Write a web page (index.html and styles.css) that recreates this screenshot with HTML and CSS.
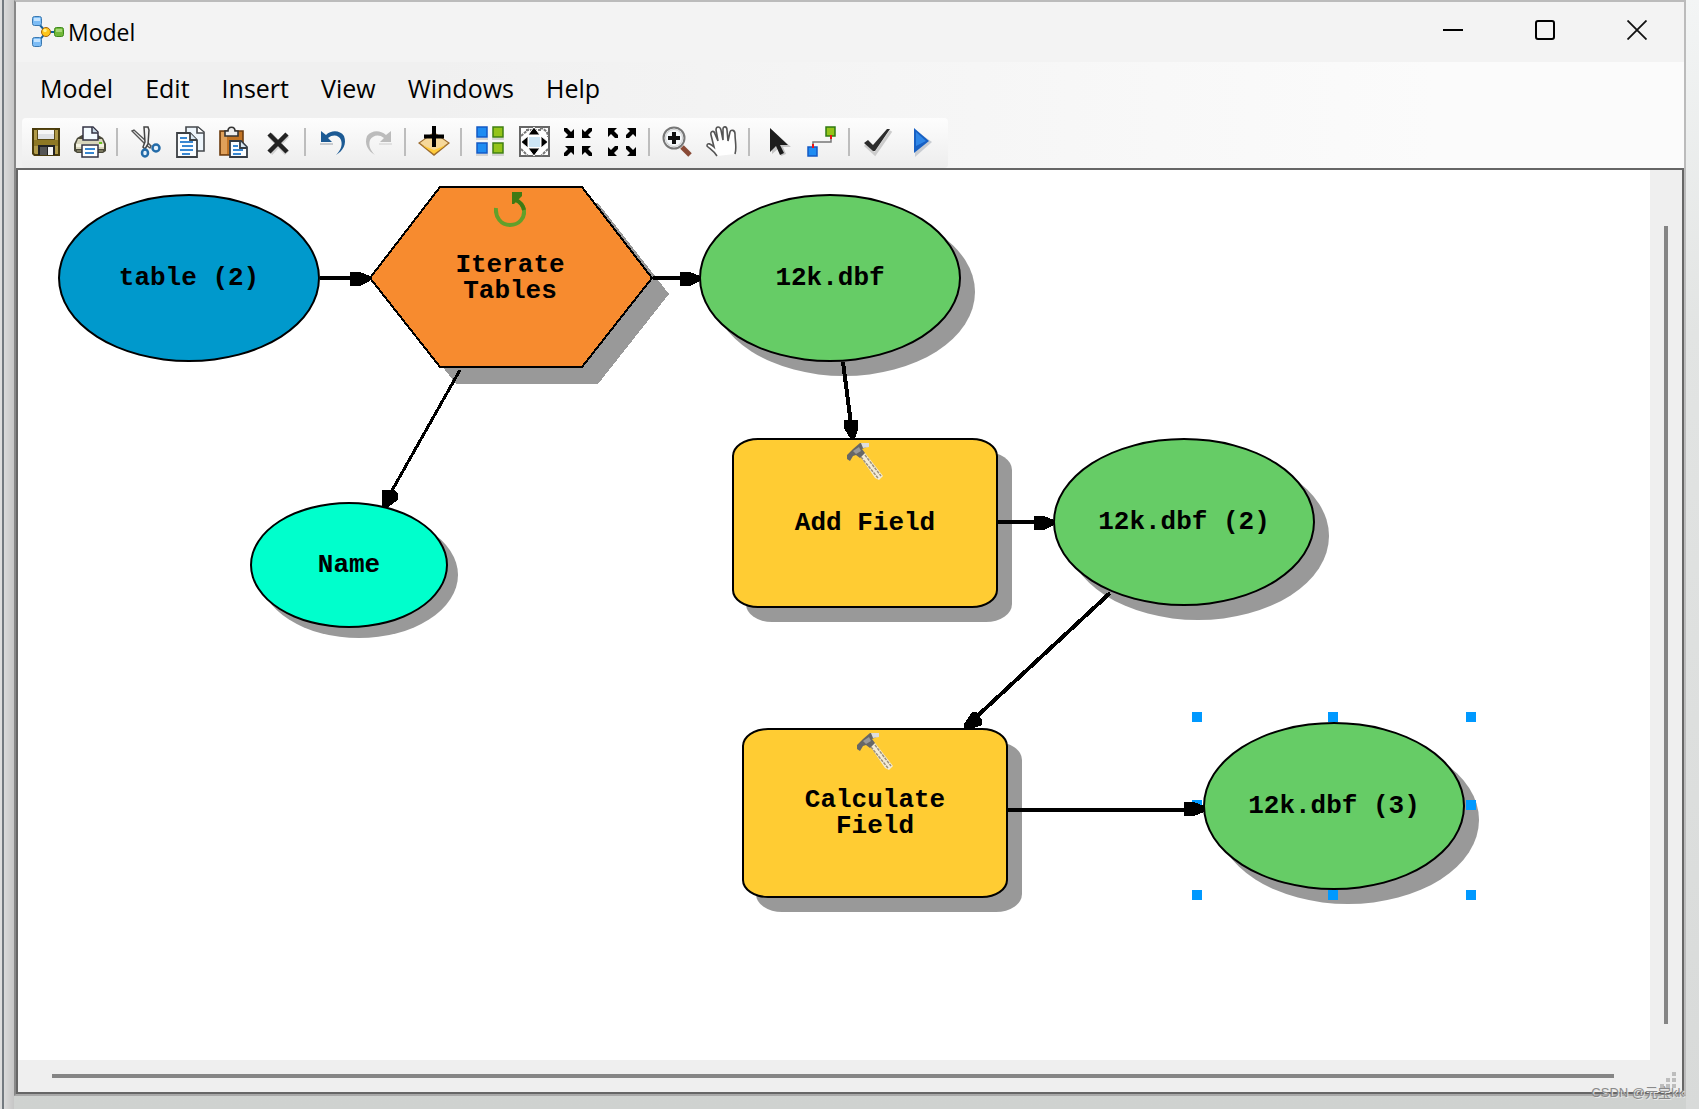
FILE: index.html
```html
<!DOCTYPE html>
<html lang="en">
<head>
<meta charset="utf-8">
<title>Model</title>
<link rel="stylesheet" href="styles.css">
</head>
<body>
<div class="rail"></div>
<main class="window">
  <header class="titlebar">
    <svg class="app-icon" width="32" height="32" viewBox="0 0 32 32" aria-hidden="true">
      <path d="M7 8 14 16 7 25M16 16H24" fill="none" stroke="#12609c" stroke-width="2"/>
      <rect x="0.5" y="0.5" width="9" height="9" rx="2" fill="#7cbcf5" stroke="#3a78b0"/>
      <rect x="2" y="2" width="6" height="3" fill="#c4e4ff"/>
      <rect x="0.5" y="21.500" width="9" height="9" rx="2" fill="#7cbcf5" stroke="#3a78b0"/>
      <rect x="2" y="23" width="6" height="3" fill="#c4e4ff"/>
      <circle cx="14" cy="16" r="4.500" fill="#ffc61a" stroke="#a8640c"/>
      <circle cx="13" cy="14.500" r="1.800" fill="#fff08a"/>
      <rect x="22.500" y="11.500" width="9" height="9" rx="2" fill="#72b83a" stroke="#3d8a1c"/>
      <rect x="24" y="13" width="6" height="3" fill="#a6d878"/>
    </svg>
    <h1 class="title">Model</h1>
    <div class="controls">
      <button class="control" aria-label="Minimize"><svg width="20" height="20" viewBox="0 0 20 20"><path d="M0 10H20" stroke="#000" stroke-width="2"/></svg></button>
      <button class="control" aria-label="Maximize"><svg width="20" height="20" viewBox="0 0 20 20"><rect x="1" y="1" width="18" height="18" rx="2" fill="none" stroke="#000" stroke-width="2"/></svg></button>
      <button class="control" aria-label="Close"><svg width="20" height="20" viewBox="0 0 20 20"><path d="M0.500 0.500 19.500 19.500M19.500 0.500 0.500 19.500" stroke="#111" stroke-width="1.800"/></svg></button>
    </div>
  </header>

  <div class="bars">
    <nav class="menu" aria-label="Menu bar">
      <button class="menu-item">Model</button>
      <button class="menu-item">Edit</button>
      <button class="menu-item">Insert</button>
      <button class="menu-item">View</button>
      <button class="menu-item">Windows</button>
      <button class="menu-item">Help</button>
    </nav>
    <div class="toolbar" role="toolbar" aria-label="Tools">
      <button class="tool" aria-label="Save"><svg viewBox="0 0 32 32"><path d="M2 2H30V30H4L2 28Z" fill="#4a3c0c"/><path d="M4 4H28V28H5L4 27Z" fill="#b09a48"/><path d="M4 14H28V20H4Z" fill="#8e7824"/><rect x="7" y="3" width="18" height="11" fill="#5a4a14"/><rect x="8" y="4" width="16" height="9" fill="#dfe1e4"/><rect x="8" y="4" width="16" height="4" fill="#f6f6f6"/><rect x="8" y="19" width="17" height="10" fill="#222"/><rect x="10" y="21" width="7" height="8" fill="#555"/><rect x="18" y="21" width="5" height="8" fill="#f4f4f4"/></svg></button>
      <button class="tool" aria-label="Print"><svg viewBox="0 0 32 32"><path d="M3 12 8 9H24L29 12 32 18V25L29 27H3L0 25V18Z" fill="#4b4a3a"/><path d="M4 13H28L30 18V23H2V18Z" fill="#d8d5bb"/><path d="M2 18H30V21H2Z" fill="#f3f2e0"/><path d="M3 24H29V26H3Z" fill="#7a785f"/><path d="M9 14V1H19L24 6V14Z" fill="#f4fbff" stroke="#334" stroke-width="1.500"/><path d="M18 1V7H24" fill="#c5d8e6" stroke="#334" stroke-width="1.500"/><rect x="8" y="19" width="16" height="12" fill="#fff" stroke="#334" stroke-width="1.500"/><path d="M11 23H21M11 27H20" stroke="#3887d2" stroke-width="2"/><rect x="25" y="16" width="3" height="2" fill="#6cc322"/></svg></button>
      <span class="sep"></span>
      <button class="tool" aria-label="Cut"><svg viewBox="0 0 32 32"><path d="M2 5 16 19 20 22 21 20 16 15 4 4Z" fill="#f4f4f4" stroke="#555" stroke-width="1.400"/><path d="M14 1H18L19 4 18 18 15 23 13 21 15 16Z" fill="#f4f4f4" stroke="#444" stroke-width="1.500"/><circle cx="26" cy="22" r="3.500" fill="#e5f1fb" stroke="#236ba8" stroke-width="2.500"/><ellipse cx="15" cy="27" rx="3" ry="3.500" fill="#e5f1fb" stroke="#236ba8" stroke-width="2.500"/></svg></button>
      <button class="tool" aria-label="Copy"><svg viewBox="0 0 32 32"><path d="M12 1H24L30 6V25H12Z" fill="#eef6fc" stroke="#44484c" stroke-width="1.600"/><path d="M23 1V7H30" fill="#fff" stroke="#44484c" stroke-width="1.600"/><path d="M3 7H16L23 14V31H3Z" fill="#fafdff" stroke="#3c4044" stroke-width="1.800"/><path d="M16 7V14H23" fill="#d7e7f3" stroke="#3c4044" stroke-width="1.800"/><path d="M6 12H13M6 16H19M8 20H19M6 24H19M8 28H16" stroke="#3887d2" stroke-width="2"/></svg></button>
      <button class="tool" aria-label="Paste"><svg viewBox="0 0 32 32"><path d="M2 5H25V29H2Z" fill="#c27424" stroke="#6c3c10" stroke-width="1.600"/><path d="M3 6H9V28H3Z" fill="#dfa05a"/><path d="M7 10V5H10C10 0 17 0 17 5H20V10Z" fill="#ededed" stroke="#333" stroke-width="1.600"/><path d="M12 15H23L29 21V31H12Z" fill="#fafdff" stroke="#333b44" stroke-width="1.800"/><path d="M22 15V22H29" fill="#d7e7f3" stroke="#333b44" stroke-width="1.800"/><path d="M15 20H20M15 24H25M15 28H23" stroke="#3887d2" stroke-width="2"/></svg></button>
      <button class="tool" aria-label="Delete"><svg viewBox="0 0 32 32"><path d="M8 9 25 27M25 9 8 27" stroke="#d0d0d0" stroke-width="6"/><path d="M7 8 25 26M25 8 7 26" stroke="#222" stroke-width="4.500"/></svg></button>
      <span class="sep"></span>
      <button class="tool" aria-label="Undo"><svg viewBox="0 0 32 32"><path d="M3 5V16H14L10 12C15 8 21 9 23 14 25 20 22 25 18 29 25 25 29 18 26 10 22 4 13 4 8 9Z" fill="#1c5a94"/><path d="M2 18H15" stroke="#b8bcc2" stroke-width="1.500"/></svg></button>
      <button class="tool" aria-label="Redo" disabled><svg viewBox="0 0 32 32"><path d="M29 5V16H18L22 12C17 8 11 9 8 14 6 20 9 25 13 29 6 25 2 18 5 10 10 4 18 4 24 9Z" fill="#bcbcbc"/><path d="M17 18H30" stroke="#dadada" stroke-width="1.500"/></svg></button>
      <span class="sep"></span>
      <button class="tool" aria-label="Add data"><svg viewBox="0 0 32 32"><path d="M0 17 16 6 32 17 16 30Z" fill="#9c6b2c"/><path d="M2 17 16 7 30 17 16 27Z" fill="#f6d89a"/><path d="M4 19 16 28 28 19 16 24Z" fill="#ffcb3a"/><path d="M16 0V21M6 10.500H26" stroke="#000" stroke-width="4"/></svg></button>
      <span class="sep"></span>
      <button class="tool" aria-label="Auto layout"><svg viewBox="0 0 32 32"><g stroke-width="1.500"><rect x="3" y="1" width="10" height="10" fill="#1e8cf2" stroke="#1459c4"/><rect x="3" y="17" width="10" height="10" fill="#1e8cf2" stroke="#1459c4"/><rect x="19" y="1" width="10" height="10" fill="#94c41a" stroke="#3f7f12"/><rect x="19" y="17" width="10" height="10" fill="#94c41a" stroke="#3f7f12"/></g><path d="M2 13H14M18 13H30M2 29H14M18 29H30" stroke="#c9c9c9" stroke-width="1.500"/></svg></button>
      <button class="tool" aria-label="Full extent"><svg viewBox="0 0 32 32"><path d="M2 1H31V30H2Z" fill="#fff" stroke="#666" stroke-width="2"/><path d="M22 2C27 3 30 6 30 11M8 4H24M3 10 11 3M3 23 10 30M30 23 23 30" fill="none" stroke="#777" stroke-width="2" stroke-dasharray="3 1"/><rect x="11" y="11" width="11" height="10" fill="#cde6f6"/><g fill="#000" stroke="#fff" stroke-width="1"><path d="M16 1 22 9H10Z"/><path d="M16 30 22 22H10Z"/><path d="M3 16 10 10V22Z"/><path d="M30 16 23 10V22Z"/></g></svg></button>
      <button class="tool" aria-label="Fixed zoom in"><svg viewBox="0 0 32 32"><g fill="#000"><path d="M2 2H5L9 6 12 3V12H3L6 9 2 5Z"/><path d="M30 2H27L23 6 20 3V12H29L26 9 30 5Z"/><path d="M2 30H5L9 26 12 29V20H3L6 23 2 27Z"/><path d="M30 30H27L23 26 20 29V20H29L26 23 30 27Z"/></g></svg></button>
      <button class="tool" aria-label="Fixed zoom out"><svg viewBox="0 0 32 32"><g fill="#000"><path d="M2 2H11L8 5 12 9V12H9L5 8 2 11Z"/><path d="M30 2H21L24 5 20 9V12H23L27 8 30 11Z"/><path d="M2 30H11L8 27 12 23V20H9L5 24 2 21Z"/><path d="M30 30H21L24 27 20 23V20H23L27 24 30 21Z"/></g></svg></button>
      <span class="sep"></span>
      <button class="tool" aria-label="Zoom in"><svg viewBox="0 0 32 32"><path d="M20 21 28 29" stroke="#8a4a36" stroke-width="5"/><circle cx="12" cy="12" r="10.500" fill="#f5f8fa" stroke="#777" stroke-width="2"/><circle cx="12" cy="12" r="8.500" fill="none" stroke="#ccc"/><path d="M12 6V18M6 12H18" stroke="#111" stroke-width="4"/></svg></button>
      <button class="tool" aria-label="Pan"><svg viewBox="0 0 32 32"><path d="M11 30C8 25 4 23 1 20 1 16 5 18 8 21L5 9C4 5 8 4 9 8L12 15 10 4C10 0 14 0 15 4L17 14V3C17 0 21 0 21 4L22 15 24 6C25 3 29 4 29 8 29 15 31 22 29 28" fill="#fff" stroke="#555" stroke-width="1.600"/></svg></button>
      <span class="sep"></span>
      <button class="tool" aria-label="Select"><svg viewBox="0 0 32 32"><path d="M10 4V28L16 23 19 30 24 28 21 21H29Z" fill="#c4c4c4"/><path d="M8 2V26L14 20 18 29 22 27 18 19H26Z" fill="#1c1c1c"/></svg></button>
      <button class="tool" aria-label="Connect"><svg viewBox="0 0 32 32"><path d="M7 20V16H25V10" fill="none" stroke="#777" stroke-width="1.500"/><rect x="2" y="21" width="9" height="9" fill="#1e8cf2" stroke="#1459c4" stroke-width="1.500"/><rect x="20" y="1" width="9" height="9" fill="#94c41a" stroke="#2f7a12" stroke-width="1.500"/><path d="M7 18V22M25 9V13" stroke="#e11" stroke-width="2"/></svg></button>
      <span class="sep"></span>
      <button class="tool" aria-label="Validate"><svg viewBox="0 0 32 32"><path d="M3 19 13 28 29 5" fill="none" stroke="#ccc" stroke-width="3"/><path d="M2 17 6 14 11 19 25 3H28L13 25H11Z" fill="#2c2c2c"/></svg></button>
      <button class="tool" aria-label="Run"><svg viewBox="0 0 32 32"><path d="M9 4V31L26 16Z" fill="#c8ccd2"/><path d="M8 2V27L23 15Z" fill="#1760c4"/><path d="M10 6V20L20 15Z" fill="#2f86e6"/></svg></button>
    </div>
  </div>

  <section class="frame">
    <div class="canvas">
      <div class="handle h1"></div><div class="handle h2"></div><div class="handle h3"></div>
      <div class="handle h4"></div><div class="handle h6"></div><div class="handle h7"></div><div class="handle h8"></div>

      <div class="node oval data n-table"><span class="label">table (2)</span></div>
      <div class="node n-iterate">
        <svg class="hexagon" width="302" height="200" viewBox="0 0 302 200" shape-rendering="crispEdges">
          <path d="M88 17H230L301 108 230 198H88L18 108Z" fill="#999"/>
          <path d="M72 1H214L284 92 214 181H72L2 92Z" fill="#f78b2f" stroke="#000" stroke-width="2"/>
        </svg>
        <svg class="badge" width="32" height="36" viewBox="0 0 32 36"><path d="M2 16C1 25 7 33 16 33 25 33 31 26 30 18 29 13 26 10 22 8" fill="none" stroke="#62a02a" stroke-width="4"/><path d="M22 8C26 10 29 13 30 18" fill="none" stroke="#3f7a14" stroke-width="4"/><path d="M18 0H28V4L20 12H18Z" fill="#3f7a14"/></svg>
        <span class="label">Iterate Tables</span>
      </div>
      <div class="node oval derived n-out1"><span class="label">12k.dbf</span></div>
      <div class="node oval value n-name"><span class="label">Name</span></div>
      <div class="node tool-box n-add">
        <svg class="badge" width="36" height="38" viewBox="0 0 36 38"><path d="M13 14 18 11 36 34 32 38 28 36Z" fill="#f4ecd8"/><path d="M14 15 31 36M18 13 34 34" stroke="#9c907a" stroke-width="1.500" stroke-dasharray="3 1"/><path d="M0 13 6 7 13 1 22 1 22 4 15 7 18 11 13 16 9 13 6 14 3 19 0 17Z" fill="#666"/><path d="M14 1H22V5L16 6Z" fill="#ddd"/><path d="M6 9 12 5 14 9 9 12Z" fill="#999"/></svg>
        <span class="label">Add Field</span>
      </div>
      <div class="node oval derived n-out2"><span class="label">12k.dbf (2)</span></div>
      <div class="node tool-box n-calc">
        <svg class="badge" width="36" height="38" viewBox="0 0 36 38"><path d="M13 14 18 11 36 34 32 38 28 36Z" fill="#f4ecd8"/><path d="M14 15 31 36M18 13 34 34" stroke="#9c907a" stroke-width="1.500" stroke-dasharray="3 1"/><path d="M0 13 6 7 13 1 22 1 22 4 15 7 18 11 13 16 9 13 6 14 3 19 0 17Z" fill="#666"/><path d="M14 1H22V5L16 6Z" fill="#ddd"/><path d="M6 9 12 5 14 9 9 12Z" fill="#999"/></svg>
        <span class="label">Calculate Field</span>
      </div>
      <div class="node oval derived n-out3"><span class="label">12k.dbf (3)</span></div>
      <div class="handle h5"></div>

      <svg class="links" width="1632" height="890" viewBox="0 0 1632 890" shape-rendering="crispEdges" aria-hidden="true">
        <g stroke="#000" stroke-width="4" fill="none">
          <path d="M302 108H340M635 108H670M825 192 833 254M979 352H1024M1092 423 955 550M990 640H1174"/>
          <path d="M442 200 372 324" stroke-width="3"/>
        </g>
        <g>
          <path d="M332 102H342L352 106V111L342 116H332Z"/>
          <path d="M662 102H672L682 106V111L672 116H662Z"/>
          <path d="M1016 346H1026L1036 350V355L1026 360H1016Z"/>
          <path d="M1166 632H1176L1186 636V642L1176 646H1166Z"/>
          <path d="M826 250H840V260L837 268H832L826 258Z"/>
          <path d="M364 320H376L380 324V330L370 337H364Z"/>
          <path d="M954 542H959V545L964 549V555L956 558H946V554Z"/>
        </g>
      </svg>
    </div>
    <div class="scroll vertical"><div class="thumb"></div></div>
    <div class="scroll horizontal"><div class="thumb"></div></div>
    <div class="corner">
      <svg width="16" height="16" viewBox="0 0 16 16" fill="#bdbdbd" aria-hidden="true"><path d="M12 0H16V4H12ZM6 6H10V10H6ZM12 6H16V10H12ZM0 12H4V16H0ZM6 12H10V16H6ZM12 12H16V16H12Z"/></svg>
    </div>
  </section>
</main>
<div class="edge"></div>
<p class="watermark">CSDN @元宝kk</p>
</body>
</html>
```
FILE: styles.css
```css
* {
  box-sizing: border-box;
}

body {
  position: relative;
  display: grid;
  grid-template-columns: 14px 1fr 13px;
  min-height: 100vh;
  margin: 0;
  overflow: hidden;
  background: linear-gradient(#dcdddd, #cfd2d0);
  font-family: "Open Sans", "Noto Sans", sans-serif;
  color: #000;
}

button {
  display: flex;
  align-items: center;
  justify-content: center;
  margin: 0;
  padding: 0;
  border: 0;
  background: none;
  font: inherit;
  color: inherit;
}

.rail {
  border-left: 2px solid #dedede;
  background: linear-gradient(90deg, #737a80 2px, #dadada 2px, #c6c6c6);
}

.edge {
  background: linear-gradient(#f3f5f5, #e2e4e3 30%, #d8dad9);
}

.window {
  display: flex;
  flex-direction: column;
  min-width: 0;
  margin-bottom: 13px;
  border: 2px solid #bbb;
  border-left-color: #888;
  border-bottom-color: #a8a8a8;
  background: #f0f0f0;
}

/* Title bar */

.titlebar {
  display: flex;
  align-items: center;
  height: 60px;
  padding: 0 1px 0 16px;
  background: #f3f3f3;
}

.title {
  flex: 1;
  margin: 0 0 0 4px;
  font-size: 23px;
  font-weight: 400;
  line-height: 30px;
}

.controls {
  display: flex;
  align-self: flex-start;
}

.control {
  width: 92px;
  height: 56px;
}

/* Menu and toolbar */

.bars {
  background: linear-gradient(90deg, #f0f0f0 25%, #fbfbfb 85%);
}

.menu {
  display: flex;
  gap: 32px;
  height: 56px;
  padding: 0 24px 4px;
  font-size: 25px;
}

.toolbar {
  display: flex;
  width: max-content;
  height: 50px;
  margin-left: 6px;
  padding: 0 4px 0 2px;
  border-radius: 4px;
  background: linear-gradient(#fdfdfd, #ededed);
}

.tool {
  width: 44px;
  height: 48px;
}

.tool svg {
  width: 32px;
  height: 32px;
}

.sep {
  width: 2px;
  height: 28px;
  margin: 10px 6px 10px 4px;
  background: #bdbdbd;
}

/* Diagram area */

.frame {
  display: grid;
  flex: 1;
  grid-template-columns: 1fr 32px;
  grid-template-rows: 1fr 32px;
  border: 2px solid #666;
}

.canvas {
  position: relative;
  min-height: 760px;
  overflow: hidden;
  background: #fff;
}

.links {
  position: absolute;
  top: 0;
  left: 0;
}

.node {
  position: absolute;
  display: flex;
  align-items: center;
  justify-content: center;
}

.label {
  position: relative;
  max-width: 180px;
  font: bold 26px/26px "Liberation Mono", monospace;
  text-align: center;
}

.oval {
  width: 262px;
  height: 168px;
  border: 2px solid #000;
  border-radius: 50%;
}

.data {
  background: #0099cc;
}

.derived {
  background: #66cc66;
  box-shadow: 14px 14px #999;
}

.value {
  width: 198px;
  height: 126px;
  background: #00ffcc;
  box-shadow: 10px 10px #999;
}

.tool-box {
  width: 266px;
  height: 170px;
  border: 2px solid #000;
  border-radius: 26px / 18px;
  background: #ffcc33;
  box-shadow: 14px 14px #999;
}

.badge {
  position: absolute;
  top: 2px;
}

.hexagon {
  position: absolute;
  top: 0;
  left: 0;
}

.n-table { left: 40px; top: 24px; }
.n-iterate { left: 350px; top: 16px; width: 284px; height: 184px; }
.n-iterate .badge { top: 6px; }
.n-out1 { left: 681px; top: 24px; }
.n-name { left: 232px; top: 332px; }
.n-add { left: 714px; top: 268px; }
.n-out2 { left: 1035px; top: 268px; }
.n-calc { left: 724px; top: 558px; }
.n-out3 { left: 1185px; top: 552px; }

.handle {
  position: absolute;
  width: 10px;
  height: 10px;
  background: #0099ff;
}

.h1 { left: 1174px; top: 542px; }
.h2 { left: 1310px; top: 542px; }
.h3 { left: 1448px; top: 542px; }
.h4 { left: 1174px; top: 630px; }
.h5 { left: 1448px; top: 630px; }
.h6 { left: 1174px; top: 720px; }
.h7 { left: 1310px; top: 720px; z-index: 1; }
.h8 { left: 1448px; top: 720px; }

/* Scroll bars */

.scroll {
  display: flex;
  background: #efefef;
}

.vertical {
  padding: 56px 14px 36px;
}

.horizontal {
  padding: 14px 36px 14px 34px;
}

.thumb {
  flex: 1;
  background: #858585;
}

.corner {
  display: flex;
  align-items: flex-end;
  justify-content: flex-end;
  padding: 4px 6px;
  background: #efefef;
}

.watermark {
  position: absolute;
  right: 15px;
  bottom: 6px;
  margin: 0;
  font: 13px/20px "Liberation Sans", "Noto Sans CJK SC", sans-serif;
  color: #8a8a8a;
  text-shadow: 1px 1px #e6e6e6;
}
```
